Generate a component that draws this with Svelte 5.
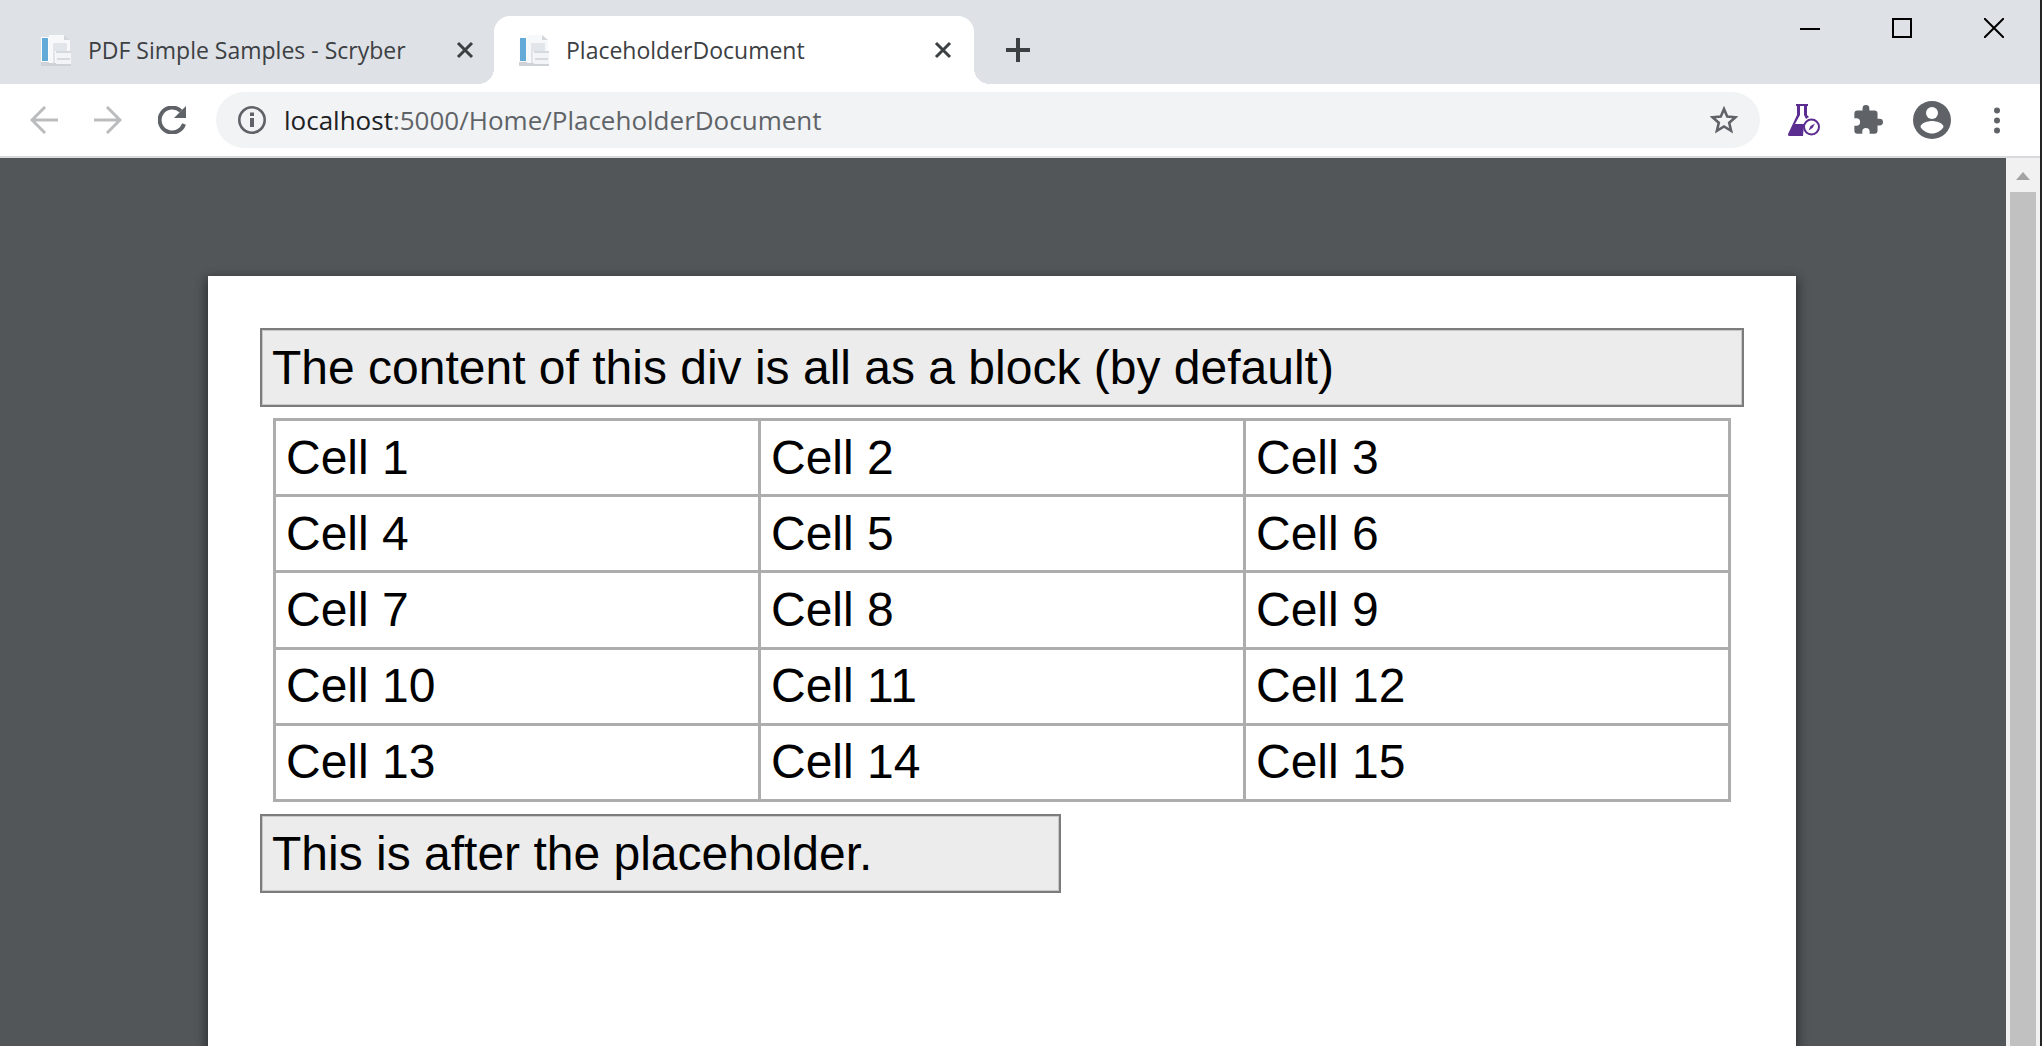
<script>
  const tabs = [
    { title: 'PDF Simple Samples - Scryber', active: false },
    { title: 'PlaceholderDocument', active: true }
  ];
  const rows = [0, 1, 2, 3, 4].map((r) => [1, 2, 3].map((c) => `Cell ${r * 3 + c}`));
</script>

<div class="window">
  <header class="strip">
    <div class="tabs">
      {#each tabs as tab}
        <div class="tab" class:active={tab.active}>
          <svg class="favicon" viewBox="0 0 32 32" aria-hidden="true">
            <path d="M1 3h9v27H1z" fill="#fbfcfd" />
            <path d="M2 4h6v23H2z" fill="#64aad8" />
            <path d="M1 28h30v4H1z" fill="#cfd2d6" />
            <path d="M9 1h15l6 5v23H9z" fill="#f7f8fa" />
            <path d="M24 1l6 5h-6z" fill="#d3d6da" />
            <path d="M13 9h14v8H13z" fill="#e2e5ea" />
            <path d="M13 15h6v2h-4v12h-2z" fill="#e0e3e8" />
            <path d="M16 17h15v13H16z" fill="#f3f4f8" />
            <path d="M16 17h15v2H16zM17 24h13v2H17z" fill="#d5d9e0" />
          </svg>
          <span class="title">{tab.title}</span>
          <button class="close" aria-label="Close tab">
            <svg viewBox="0 0 18 18"><path d="M2 2l14 14M16 2L2 16" /></svg>
          </button>
        </div>
      {/each}
      <button class="new" aria-label="New tab">
        <svg viewBox="0 0 24 24"><path d="M12 0v24M0 12h24" /></svg>
      </button>
    </div>
    <div class="controls">
      <button aria-label="Minimize"><svg viewBox="0 0 20 20"><path d="M0 11h20" /></svg></button>
      <button aria-label="Maximize"><svg viewBox="0 0 20 20"><path d="M1 1h18v18H1z" /></svg></button>
      <button aria-label="Close"><svg viewBox="0 0 20 20"><path d="M0 0l20 20M20 0L0 20" /></svg></button>
    </div>
  </header>

  <nav class="toolbar">
    <div class="nav">
      <button class="dim" aria-label="Back">
        <svg viewBox="0 0 28 28"><path d="M28 14H2M15 1L2 14l13 13" /></svg>
      </button>
      <button class="dim" aria-label="Forward">
        <svg viewBox="0 0 28 28"><path d="M0 14h26M13 1l13 13-13 13" /></svg>
      </button>
      <button aria-label="Reload">
        <svg viewBox="0 0 28 28">
          <path d="M26 18A12.500 12.500 0 1 1 23 5.200" class="thick" />
          <path d="M28 0v12H16z" class="solid" />
        </svg>
      </button>
    </div>
    <div class="address">
      <svg class="info" viewBox="0 0 28 28" aria-hidden="true">
        <circle cx="14" cy="14" r="12.700" />
        <path d="M14 12v9M14 6.500v3.500" class="stem" />
      </svg>
      <a class="url" href="#top"><span>localhost</span>:5000/Home/PlaceholderDocument</a>
      <button aria-label="Bookmark this page">
        <svg viewBox="0 0 28 28">
          <path d="M14 3l3.200 7.600 8.300.7-6.300 5.400 1.900 8.100L14 20.500l-7.100 4.300 1.900-8.100-6.300-5.400 8.300-.7z" />
        </svg>
      </button>
    </div>
    <div class="actions">
      <button class="flask" aria-label="Lab extension">
        <svg viewBox="0 0 32 32">
          <path d="M8 0h12v2H8z" />
          <path d="M9 2h3v9L7 20h9l-1 12H1q-2-1 0-4l8-17zM16 2h3v9l2 2-3 2-2-4z" />
          <circle cx="23.500" cy="23" r="7.500" />
          <path d="M20.500 26.500l2-4.500 4.500-2.500-2.500 4.500z" />
        </svg>
      </button>
      <button class="puzzle" aria-label="Extensions">
        <svg viewBox="0 0 22 22">
          <path d="M19.500 10H18V6c0-1.100-.9-2-2-2h-4V2.500a2.500 2.500 0 0 0-5 0V4H3c-1.100 0-2 .9-2 2v3.800h1.500a2.700 2.700 0 0 1 0 5.400H1V19c0 1.100.9 2 2 2h3.800v-1.500a2.700 2.700 0 0 1 5.400 0V21H16c1.100 0 2-.9 2-2v-4h1.500a2.500 2.500 0 0 0 0-5z" />
        </svg>
      </button>
      <button class="avatar" aria-label="Profile">
        <svg viewBox="0 0 38 38">
          <circle cx="19" cy="19" r="19" />
          <circle cx="19" cy="12" r="6" class="hole" />
          <path d="M7.500 26c0-4 7.500-6 11.500-6s11.500 2 11.500 6C28 30 23.500 32.500 19 32.500S10 30 7.500 26z" class="hole" />
        </svg>
      </button>
      <button class="menu" aria-label="Menu">
        <svg viewBox="0 0 6 28">
          <circle cx="3" cy="4.500" r="3" /><circle cx="3" cy="14.500" r="3" /><circle cx="3" cy="24.500" r="3" />
        </svg>
      </button>
    </div>
  </nav>

  <main class="viewer" id="top">
    <article class="page">
      <div class="block">The content of this div is all as a block (by default)</div>
      <table>
        <tbody>
          {#each rows as row}
            <tr>{#each row as cell}<td>{cell}</td>{/each}</tr>
          {/each}
        </tbody>
      </table>
      <div class="block short">This is after the placeholder.</div>
    </article>
    <div class="scrollbar" aria-hidden="true">
      <svg viewBox="0 0 14 8"><path d="M7 0l7 8H0z" /></svg>
      <div class="thumb"></div>
    </div>
  </main>
</div>

<style>
  :global(body) {
    margin: 0;
  }
  .window {
    box-sizing: border-box;
    min-height: 100vh;
    display: flex;
    flex-direction: column;
    border-right: 2px solid #242424;
    font-family: 'Open Sans', 'Noto Sans', sans-serif;
  }
  button {
    display: flex;
    align-items: center;
    justify-content: center;
    padding: 0;
    border: 0;
    background: none;
    color: inherit;
  }
  svg {
    display: block;
    flex: none;
    fill: none;
    stroke: currentColor;
  }
  .strip {
    display: flex;
    justify-content: space-between;
    height: 84px;
    background: #dee1e6;
    color: #3c4043;
  }
  .tabs {
    display: flex;
    padding: 16px 0 0 16px;
  }
  .tab {
    position: relative;
    box-sizing: border-box;
    width: 480px;
    display: flex;
    align-items: center;
    gap: 16px;
    padding: 0 22px 0 24px;
    border-radius: 16px 16px 0 0;
    font-size: 23px;
  }
  .tab:first-child {
    width: 478px;
    padding-right: 20px;
  }
  .active {
    background: #fff;
  }
  .active::before,
  .active::after {
    content: '';
    position: absolute;
    bottom: 0;
    width: 16px;
    height: 16px;
  }
  .active::before {
    right: 100%;
    background: radial-gradient(circle at 0 0, transparent 16px, #fff 16px);
  }
  .active::after {
    left: 100%;
    background: radial-gradient(circle at 100% 0, transparent 16px, #fff 16px);
  }
  .favicon {
    width: 32px;
    height: 32px;
    stroke: none;
  }
  .title {
    flex: 1;
    white-space: nowrap;
    line-height: 32px;
  }
  .close svg {
    width: 18px;
    height: 18px;
    stroke-width: 3;
  }
  .new {
    margin-left: 32px;
  }
  .new svg {
    width: 24px;
    height: 24px;
    stroke-width: 4;
  }
  .controls {
    display: flex;
    height: 56px;
    color: #000;
  }
  .controls button {
    width: 92px;
  }
  .controls svg {
    width: 20px;
    height: 20px;
    stroke-width: 2;
  }
  .toolbar {
    box-sizing: border-box;
    display: flex;
    align-items: center;
    height: 74px;
    padding: 0 40px 0 30px;
    border-bottom: 2px solid #d9dadd;
    background: #fff;
    color: #5f6368;
  }
  .nav {
    display: flex;
    gap: 36px;
    margin-right: 30px;
  }
  .nav svg {
    width: 28px;
    height: 28px;
    stroke-width: 3;
  }
  .nav .thick {
    stroke-width: 4;
  }
  .nav .solid {
    fill: currentColor;
    stroke: none;
  }
  .dim {
    color: #babcbe;
  }
  .address {
    flex: 1;
    box-sizing: border-box;
    display: flex;
    align-items: center;
    height: 56px;
    padding: 0 22px;
    border-radius: 28px;
    background: #f1f3f4;
  }
  .address svg {
    width: 28px;
    height: 28px;
    stroke-width: 2.600;
  }
  .info .stem {
    stroke-width: 4;
  }
  .url {
    flex: 1;
    margin-left: 18px;
    color: #5f6368;
    font-size: 26px;
    line-height: 36px;
    text-decoration: none;
  }
  .url span {
    color: #202124;
  }
  .actions {
    display: flex;
    align-items: center;
    margin-left: 28px;
  }
  .actions svg {
    fill: currentColor;
    stroke: none;
  }
  .flask {
    color: #5c2d91;
  }
  .flask svg {
    width: 32px;
    height: 32px;
  }
  .flask circle {
    fill: #fff;
    stroke: currentColor;
    stroke-width: 2;
  }
  .puzzle {
    margin-left: 33px;
  }
  .puzzle svg {
    width: 30px;
    height: 30px;
  }
  .avatar {
    margin-left: 30px;
  }
  .avatar svg {
    width: 38px;
    height: 38px;
  }
  .avatar .hole {
    fill: #fff;
  }
  .menu {
    margin-left: 43px;
  }
  .menu svg {
    width: 6px;
    height: 28px;
  }
  .viewer {
    flex: 1;
    display: flex;
    background: #525659;
    overflow: hidden;
  }
  .page {
    flex: 1;
    margin: 118px 210px 0 208px;
    padding: 52px 52px 0;
    background: #fff;
    box-shadow: 0 4px 10px 2px rgba(0, 0, 0, 0.45);
    color: #000;
    font-family: 'Liberation Sans', Arial, sans-serif;
    font-size: 48px;
    line-height: 55px;
  }
  .block {
    padding: 10px;
    border: 2px solid #7c7c7c;
    background: #ececec;
    box-shadow: inset 0 0 0 1px #c8c8c8;
  }
  .short {
    box-sizing: border-box;
    width: 54%;
  }
  table {
    width: calc(100% - 26px);
    height: 384px;
    margin: 11px 13px 12px;
    border-collapse: collapse;
    table-layout: fixed;
  }
  td {
    padding: 9px 10px;
    border: 3px solid #adadad;
    line-height: 54px;
  }
  .scrollbar {
    flex: none;
    width: 34px;
    display: flex;
    flex-direction: column;
    align-items: center;
    gap: 12px;
    padding-top: 14px;
    background: #f1f1f1;
  }
  .scrollbar svg {
    width: 14px;
    height: 8px;
    fill: #a3a3a3;
    stroke: none;
  }
  .thumb {
    flex: 1;
    width: 26px;
    background: #c1c1c1;
  }
</style>
